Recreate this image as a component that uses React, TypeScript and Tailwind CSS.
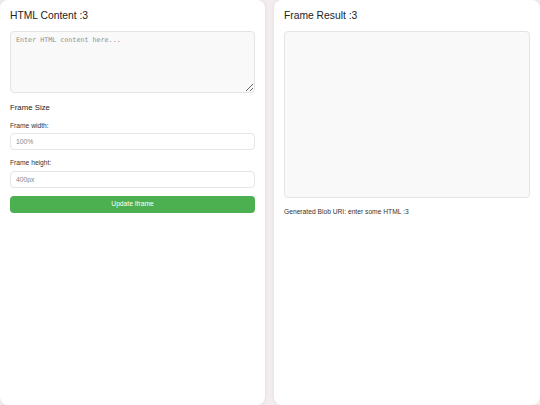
import React, { useState } from "react";

const font = { fontFamily: '"Liberation Sans", Arial, sans-serif' };

export default function App() {
  const [html, setHtml] = useState("");
  const [width, setWidth] = useState("");
  const [height, setHeight] = useState("");

  return (
    <div
      className="flex h-[405px] w-[540px] gap-[9px] bg-[#f4edf0] text-[#222]"
      style={font}
    >
      <div className="flex w-[265px] flex-col rounded-lg bg-white px-[10px] pt-[10px] shadow-[0_0_4px_rgba(0,0,0,0.08)]">
        <h2 className="text-[10.3px] leading-[12px]">HTML Content :3</h2>
        <textarea
          value={html}
          onChange={(e) => setHtml(e.target.value)}
          placeholder="Enter HTML content here..."
          className="mt-[9px] h-[62px] w-full resize-y rounded-[4px] border border-[#e4e4e4] bg-[#f9f9f9] px-[5px] py-[4px] text-[6.7px] leading-[9px] placeholder:text-[#8f8f8f]"
          style={{ fontFamily: '"DejaVu Sans Mono", "Liberation Mono", monospace' }}
        />
        <h3 className="mt-[10px] text-[7.8px] leading-[10px]">Frame Size</h3>
        <label className="mt-[8px] text-[6.7px] leading-[9px] text-[#333]">
          Frame width:
        </label>
        <input
          value={width}
          onChange={(e) => setWidth(e.target.value)}
          placeholder="100%"
          className="mt-[3px] h-[17px] w-full rounded-[4px] border border-[#e5e5e5] px-[5px] text-[6.8px] placeholder:text-[#888]"
        />
        <label className="mt-[8px] text-[6.7px] leading-[9px] text-[#333]">
          Frame height:
        </label>
        <input
          value={height}
          onChange={(e) => setHeight(e.target.value)}
          placeholder="400px"
          className="mt-[4px] h-[17px] w-full rounded-[4px] border border-[#e5e5e5] px-[5px] text-[6.8px] placeholder:text-[#888]"
        />
        <button className="mt-[8px] h-[17px] w-full rounded-[4px] bg-[#4caf50] text-[6.7px] text-white">
          Update Iframe
        </button>
      </div>
      <div className="flex flex-1 flex-col rounded-lg bg-white px-[10px] pt-[10px] shadow-[0_0_4px_rgba(0,0,0,0.08)]">
        <h2 className="text-[10.3px] leading-[12px]">Frame Result :3</h2>
        <div className="mt-[9px] h-[167px] w-full rounded-[4px] border border-[#e5e5e5] bg-[#f9f9f9]" />
        <p className="mt-[9px] text-[6.7px] leading-[9px] text-[#333]">
          Generated Blob URI: enter some HTML :3
        </p>
      </div>
    </div>
  );
}
